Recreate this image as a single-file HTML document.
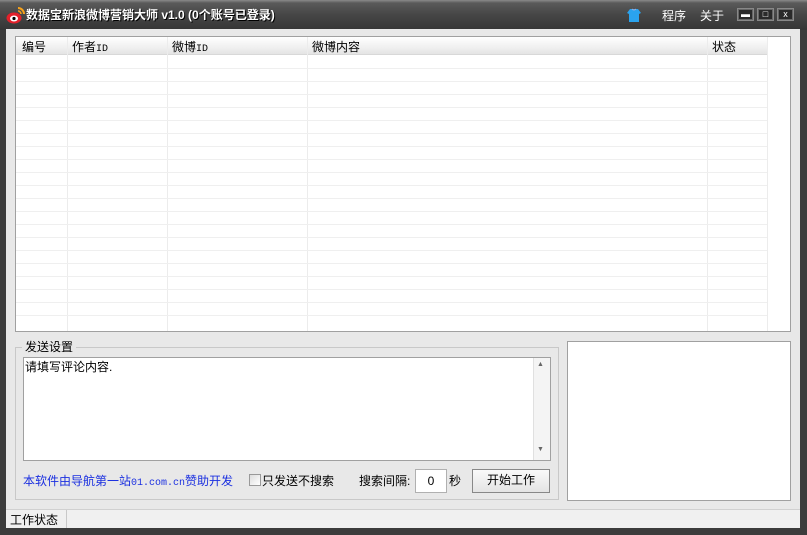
<!DOCTYPE html>
<html><head><meta charset="utf-8"><style>
*{margin:0;padding:0;box-sizing:border-box}
body{width:807px;height:535px;overflow:hidden;background:#3c3c3c;font-family:"Liberation Sans","Noto Sans CJK SC","WenQuanYi Zen Hei",sans-serif;font-size:12px;color:#000;position:relative}
.a{position:absolute}
#tb{left:0;top:0;width:807px;height:30px;background:linear-gradient(#8a8a8a 0,#5a5a5a 3px,#474747 14px,#363636 29px)}
#title{left:26px;top:6px;color:#fff;font-weight:bold;font-size:12px;text-shadow:1px 1px 0 #000}
#client{left:6px;top:29px;width:794px;height:499px;background:#e8e8e8}
#tbl{left:15px;top:36px;width:776px;height:296px;background:#fff;border:1px solid #a0a0a0}
.hd{left:0;top:0;width:751px;height:18px;background:linear-gradient(#fff,#f0f0f0 60%,#e4e4e4);border-bottom:1px solid #d8d8d8}
.ht{top:1px}
.vl{top:0;width:1px;height:294px;background:#ececec}
.hl{left:0;height:1px;width:751px;background:#efefef}
.btn{border:1px solid #888;background:#2a2a2a;width:17px;height:13px;top:8px;color:#fff;font-size:9px;text-align:center;line-height:11px;box-shadow:inset 0 0 0 1px #666}
.mono{font-family:"Liberation Mono",monospace;font-size:10px}
</style></head><body>
<div id="tb" class="a"></div>
<svg class="a" style="left:6px;top:5px" width="20" height="20" viewBox="0 0 20 20">
<ellipse cx="8" cy="13" rx="7.5" ry="5.5" fill="#e3202a"/><ellipse cx="8" cy="13.5" rx="4" ry="3" fill="#fff"/><circle cx="8" cy="13.5" r="1.6" fill="#000"/>
<path d="M12 3a6 6 0 0 1 6 6" stroke="#f7a21b" stroke-width="2" fill="none"/><path d="M12 6a3 3 0 0 1 3 3" stroke="#f7a21b" stroke-width="1.6" fill="none"/></svg>
<div id="title" class="a">数据宝新浪微博营销大师 v1.0 (0个账号已登录)</div>
<svg class="a" style="left:626px;top:7px" width="16" height="16" viewBox="0 0 16 16"><path d="M4 2h8l3 4-2 1v8H3V7L1 6z" fill="#2aa3ee"/><path d="M6 2q2 2 4 0" stroke="#9ad" fill="none"/></svg>
<div class="a" style="left:662px;top:7px;color:#fff">程序</div>
<div class="a" style="left:700px;top:7px;color:#fff">关于</div>
<div class="a btn" style="left:737px">▬</div>
<div class="a btn" style="left:757px">□</div>
<div class="a btn" style="left:777px">x</div>
<div id="client" class="a"></div>
<div id="tbl" class="a">
<div class="a hd"></div>
<div class="a vl" style="left:51px"></div><div class="a vl" style="left:151px"></div><div class="a vl" style="left:291px"></div><div class="a vl" style="left:691px"></div><div class="a vl" style="left:751px"></div>
<div class="a hl" style="top:31px"></div><div class="a hl" style="top:44px"></div><div class="a hl" style="top:57px"></div><div class="a hl" style="top:70px"></div><div class="a hl" style="top:83px"></div><div class="a hl" style="top:96px"></div><div class="a hl" style="top:109px"></div><div class="a hl" style="top:122px"></div><div class="a hl" style="top:135px"></div><div class="a hl" style="top:148px"></div><div class="a hl" style="top:161px"></div><div class="a hl" style="top:174px"></div><div class="a hl" style="top:187px"></div><div class="a hl" style="top:200px"></div><div class="a hl" style="top:213px"></div><div class="a hl" style="top:226px"></div><div class="a hl" style="top:239px"></div><div class="a hl" style="top:252px"></div><div class="a hl" style="top:265px"></div><div class="a hl" style="top:278px"></div>
<div class="a ht" style="left:6px">编号</div><div class="a ht" style="left:56px">作者<span class="mono">ID</span></div><div class="a ht" style="left:156px">微博<span class="mono">ID</span></div><div class="a ht" style="left:296px">微博内容</div><div class="a ht" style="left:696px">状态</div>
</div>
<div class="a" style="left:15px;top:347px;width:544px;height:153px;border:1px solid #c8c8c8"></div>
<div class="a" style="left:22px;top:338px;background:#e8e8e8;padding:0 3px">发送设置</div>
<div class="a" style="left:23px;top:357px;width:528px;height:104px;background:#fff;border:1px solid #a0a0a0"></div>
<div class="a" style="left:25px;top:358px">请填写评论内容.</div>
<div class="a" style="left:533px;top:358px;width:17px;height:102px;background:#f4f4f4;border-left:1px solid #e0e0e0"></div>
<div class="a" style="left:537px;top:361px;font-size:7px;color:#666">▲</div>
<div class="a" style="left:537px;top:446px;font-size:7px;color:#666">▼</div>
<div class="a" style="left:23px;top:472px;color:#1a2fe0">本软件由导航第一站<span class="mono">01.com.cn</span>赞助开发</div>
<div class="a" style="left:249px;top:474px;width:12px;height:12px;border:1px solid #999;background:linear-gradient(135deg,#ddd,#fff)"></div>
<div class="a" style="left:262px;top:472px">只发送不搜索</div>
<div class="a" style="left:359px;top:472px">搜索间隔:</div>
<div class="a" style="left:415px;top:469px;width:32px;height:24px;background:#fff;border:1px solid #b0b0b0;text-align:center;line-height:22px">0</div>
<div class="a" style="left:449px;top:472px">秒</div>
<div class="a" style="left:472px;top:469px;width:78px;height:24px;border:1px solid #888;background:linear-gradient(#fafafa,#e4e4e4);text-align:center;line-height:21px">开始工作</div>
<div class="a" style="left:567px;top:341px;width:224px;height:160px;background:#fff;border:1px solid #a0a0a0"></div>
<div class="a" style="left:6px;top:509px;width:794px;height:19px;background:#f0f0f0;border-top:1px solid #d0d0d0"></div>
<div class="a" style="left:66px;top:510px;width:1px;height:18px;background:#c8c8c8"></div>
<div class="a" style="left:10px;top:511px">工作状态</div>
</body></html>
